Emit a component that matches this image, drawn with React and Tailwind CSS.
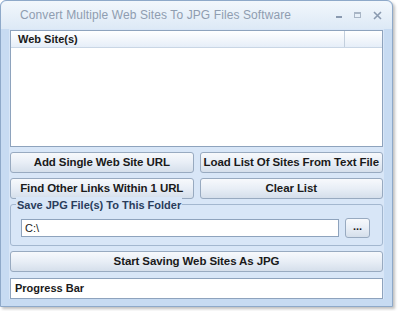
import React from 'react';

const Btn = ({ children, className = '' }) => (
  <button
    className={`flex shrink-0 items-center justify-center whitespace-nowrap rounded-[3px] border border-[#98aac0] bg-gradient-to-b from-[#f7f9fc] via-[#e8eef6] to-[#d5dfeb] text-[11.5px] tracking-[-0.1px] font-bold text-[#1a1a1a] ${className}`}
  >
    {children}
  </button>
);

export default function App() {
  return (
    <div className="w-[400px] h-[311px] bg-white font-['Liberation_Sans',Arial,sans-serif]">
      <div className="w-[393px] h-[307px] rounded-t-[6px] border border-[#8ea9c9] bg-[#c7dbf2] shadow-[2px_2px_3px_rgba(0,0,0,0.25)] flex flex-col">
        {/* Title bar */}
        <div className="h-[28px] shrink-0 flex items-center pl-[19px] pr-[10px] rounded-t-[6px] bg-gradient-to-b from-[#f2f7fc] to-[#dde9f6]">
          <span className="text-[12px] text-[#8f9db0] tracking-[0.1px]">Convert Multiple Web Sites To JPG Files Software</span>
          <div className="ml-auto flex items-center gap-[12px] text-[#8a9ab0]">
            <span className="block w-[6px] h-[2px] bg-[#8a9ab0] mt-[4px]"></span>
            <span className="block w-[7px] h-[6px] border border-[#a9b6c6] border-t-2"></span>
            <svg width="9" height="9" viewBox="0 0 9 9"><path d="M1 1L8 8M8 1L1 8" stroke="#8a9ab0" strokeWidth="1.6" /></svg>
          </div>
        </div>

        {/* Client area */}
        <div className="shrink-0 mx-[8px] bg-[#d8e6f7] flex flex-col px-[1px] pt-[1px]">
          {/* List */}
          <div className="h-[117px] shrink-0 border border-[#8ea3bd] bg-white flex flex-col">
            <div className="h-[17px] flex border-b border-[#c9d6e5] bg-gradient-to-b from-[#ffffff] to-[#e6eef8]">
              <div className="w-[334px] border-r border-[#c3cfdd] pl-[7px] flex items-center text-[11px] font-bold text-[#1a1a1a]">Web Site(s)</div>
            </div>
          </div>

          {/* Buttons */}
          <div className="mt-[5px] grid grid-cols-2 gap-x-[6px] gap-y-[5px]">
            <Btn className="h-[21px]">Add Single Web Site URL</Btn>
            <Btn className="h-[21px]">Load List Of Sites From Text File</Btn>
            <Btn className="h-[21px]">Find Other Links Within 1 URL</Btn>
            <Btn className="h-[21px]">Clear List</Btn>
          </div>

          {/* Group box */}
          <div className="relative mt-[5px] h-[42px] shrink-0 border border-[#a3b7cf] rounded-[3px] flex items-end pl-[10px] pr-[12px] pb-[8px] gap-[6px]">
            <span className="absolute -top-[8px] left-[5px] px-[1px] bg-[#d8e6f7] text-[11px] font-bold text-[#2a3d5c]">Save JPG File(s) To This Folder</span>
            <div className="flex-1 h-[18px] border border-[#8ea3bd] bg-white flex items-center pl-[3px] text-[11px] text-[#1a1a1a]">C:\</div>
            <Btn className="w-[25px] h-[20px] text-[11px] leading-none pb-[3px] mb-[-1px]">...</Btn>
          </div>

          {/* Start button */}
          <Btn className="mt-[5px] h-[21px]">Start Saving Web Sites As JPG</Btn>

          {/* Progress bar */}
          <div className="mt-[6px] h-[21px] shrink-0 border border-[#8ea3bd] bg-white flex items-center pl-[4px] text-[11px] font-bold text-[#1a1a1a]">Progress Bar</div>
        </div>
      </div>
    </div>
  );
}
